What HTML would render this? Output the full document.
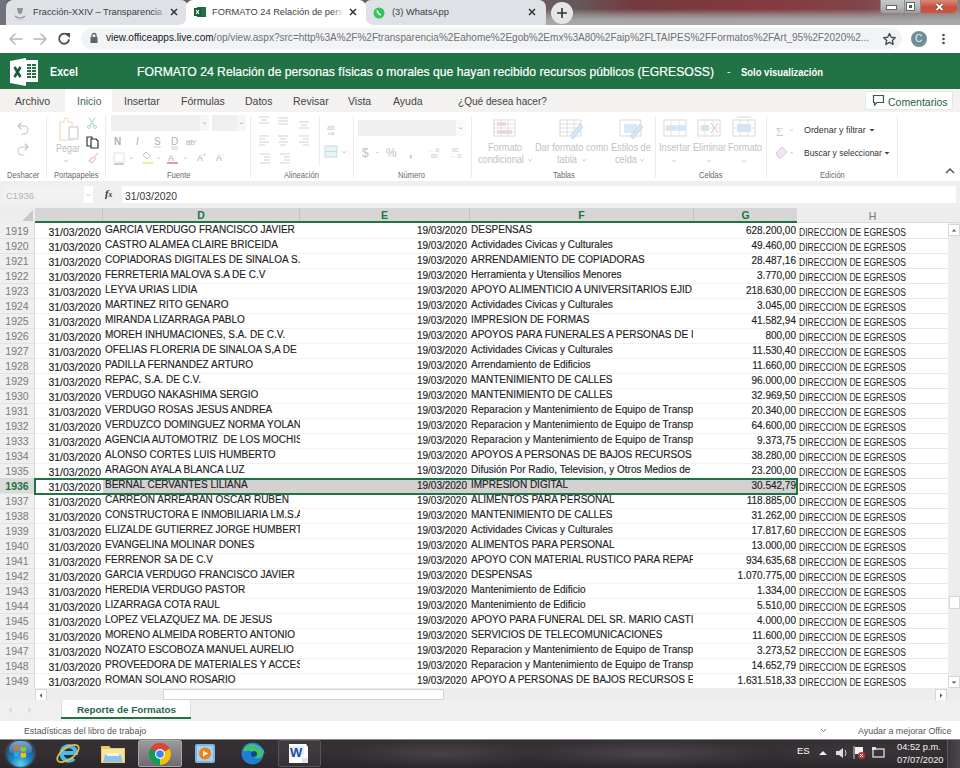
<!DOCTYPE html>
<html><head><meta charset="utf-8">
<style>
*{margin:0;padding:0;box-sizing:border-box}
html,body{width:960px;height:768px;overflow:hidden;background:#fff;font-family:"Liberation Sans",sans-serif;color:#222}
.a{position:absolute}
.tab{top:0;height:25px;background:#dee1e6;border-radius:7px 7px 0 0}
.tabt{font-size:9.3px;color:#3c4043;white-space:nowrap;overflow:hidden;top:7px}
.rt{top:94px;font-size:11.7px;color:#444;white-space:nowrap;transform:scaleX(.9);transform-origin:0 0}
.rib{font-size:10.2px;color:#c2c2c2;white-space:nowrap;transform:scaleX(.9);transform-origin:0 0}
.gl{top:170px;font-size:8.6px;color:#6a6a6a;white-space:nowrap;transform:scaleX(.88);transform-origin:0 0}
.sep{top:116px;width:1px;height:62px;background:#ececec}
.ch{top:208px;height:14px;background:#d6d6d6;border-right:1px solid #c4c4c4;font-size:10.5px;font-weight:bold;color:#217346;text-align:center;line-height:15px}
.rh{position:absolute;left:0;width:34px;height:15px;font-size:10.5px;color:#7a7a7a;text-align:center;line-height:17px}
.rhs{background:#dadada;color:#217346;font-weight:bold}
.c{position:absolute;height:15px;white-space:pre;overflow:hidden;font-size:10px;color:#1e1e1e;-webkit-text-stroke:0.15px #1e1e1e}
.gr{position:absolute;left:35px;width:762px;height:1px;background:#f2f2f2}
.dt{left:35px;width:66px;text-align:right;font-size:10.5px;line-height:19px}
.nm{left:105px;width:195px;line-height:14px}
.ed{left:300px;width:167px;text-align:right;line-height:16px;font-size:10px}
.cp{left:471px;width:222px;line-height:14px}
.vl{left:694px;width:102px;text-align:right;line-height:15px}
.hc{position:absolute;left:797px;width:151px;height:15px;border-bottom:1px solid #e6e6e6;background:#fff;overflow:hidden}
.hc span{position:absolute;left:2px;top:3px;font-size:10px;transform:scaleX(0.856);transform-origin:0 0;white-space:nowrap;color:#1e1e1e}
.selrow{position:absolute;left:103px;width:694px;height:15px;background:#d2d2d2}
.sbtn{width:12px;height:12px;background:#fff;border:1px solid #d6d6d6;display:flex;align-items:center;justify-content:center}
</style></head><body>
<!-- ===== window frame + tabs ===== -->
<div class="a" style="left:0;top:0;width:960px;height:25px;background:linear-gradient(90deg,#6a5a5e 0%,#6a5a5e 57%,#66585c 60%,#743a3e 66%,#843a3e 80%,#80464a 90%,#8a8085 100%)"></div>
<div class="a" style="left:545px;top:0;width:415px;height:25px;background:linear-gradient(180deg,rgba(0,0,0,0) 0%,rgba(0,0,0,0) 36%,rgba(160,158,160,0.75) 62%,rgba(165,165,167,1) 80%,rgba(170,170,172,1) 100%)"></div>
<div class="a" style="left:0;top:0;width:7px;height:25px;background:#70717d"></div>
<div class="a tab" style="left:6px;width:182px"></div>
<div class="a tab" style="left:364px;width:182px"></div>
<div class="a tab" style="left:186px;width:180px;background:#fff"></div>
<div class="a" style="left:8px;top:23px;width:178px;height:2px;background:#dee1e6"></div>
<svg class="a" style="left:179px;top:18px" width="7" height="7" viewBox="0 0 7 7"><path d="M7 0V7H0A7 7 0 0 0 7 0Z" fill="#fff"/></svg>
<svg class="a" style="left:366px;top:18px" width="7" height="7" viewBox="0 0 7 7"><path d="M0 0V7H7A7 7 0 0 1 0 0Z" fill="#fff"/></svg>
<!-- favicon 1 -->
<svg class="a" style="left:14px;top:6px" width="12" height="16" viewBox="0 0 12 16"><path d="M3 2h6l-1 5q-2 2-4 0z" fill="#8a9a8c"/><path d="M1 10q5 4 10 0" stroke="#888" stroke-width="1.2" fill="none"/><path d="M2 13q4 2 8 0" stroke="#ccc" stroke-width="1" fill="none"/></svg>
<div class="a tabt" style="left:33px;width:134px">Fracción-XXIV – Transparencia A</div>
<div class="a" style="left:154px;top:4px;width:14px;height:16px;background:linear-gradient(90deg,rgba(222,225,230,0),#dee1e6 85%)"></div>
<svg class="a" style="left:170px;top:8px" width="8" height="8" viewBox="0 0 8 8"><path d="M1 1L7 7M7 1L1 7" stroke="#333" stroke-width="1.5"/></svg>
<!-- excel favicon -->
<svg class="a" style="left:194px;top:6px" width="12" height="12" viewBox="0 0 12 12"><rect x="3" y="1" width="9" height="10" fill="#1e7145"/><rect x="0" y="2" width="7" height="8" fill="#185c37"/><path d="M2 4l3 4M5 4L2 8" stroke="#fff" stroke-width="1.2"/></svg>
<div class="a tabt" style="left:212px;width:134px">FORMATO 24 Relación de personas</div>
<div class="a" style="left:332px;top:4px;width:14px;height:16px;background:linear-gradient(90deg,rgba(255,255,255,0),#fff 85%)"></div>
<svg class="a" style="left:349px;top:8px" width="8" height="8" viewBox="0 0 8 8"><path d="M1 1L7 7M7 1L1 7" stroke="#333" stroke-width="1.5"/></svg>
<!-- whatsapp favicon -->
<svg class="a" style="left:373px;top:7px" width="12" height="12" viewBox="0 0 12 12"><circle cx="6" cy="6" r="5.5" fill="#2fc657"/><path d="M4 3.5q1 3.5 4 4.5" stroke="#fff" stroke-width="1.6" fill="none"/></svg>
<div class="a tabt" style="left:392px">(3) WhatsApp</div>
<svg class="a" style="left:528px;top:8px" width="8" height="8" viewBox="0 0 8 8"><path d="M1 1L7 7M7 1L1 7" stroke="#333" stroke-width="1.5"/></svg>
<!-- new tab -->
<div class="a" style="left:551px;top:2px;width:22px;height:22px;border-radius:11px;background:#e6e6e8"></div>
<svg class="a" style="left:556px;top:7px" width="12" height="12" viewBox="0 0 12 12"><path d="M6 1V11M1 6H11" stroke="#333" stroke-width="1.6"/></svg>
<!-- window controls -->
<div class="a" style="left:880px;top:0;width:78px;height:14px;border:1px solid #8a8a8a;border-top:none;border-radius:0 0 4px 4px;background:linear-gradient(180deg,#c9c9cb 0%,#b8b8ba 50%,#9c9c9e 100%)"></div>
<div class="a" style="left:921px;top:0;width:36px;height:13px;border-radius:0 0 4px 0;background:linear-gradient(180deg,#d98a7c 0%,#c9503b 55%,#d2533c 100%)"></div>
<div class="a" style="left:904px;top:0;width:1px;height:13px;background:#8a8a8a"></div>
<div class="a" style="left:920px;top:0;width:1px;height:13px;background:#8a8a8a"></div>
<div class="a" style="left:887px;top:6px;width:9px;height:3px;background:#fff;outline:1px solid #666"></div>
<div class="a" style="left:907px;top:3px;width:7px;height:7px;border:2px solid #fff;outline:1px solid #666;background:#555"></div>
<svg class="a" style="left:934px;top:2px" width="11" height="10" viewBox="0 0 11 10"><path d="M2.5 2L8.5 8M8.5 2L2.5 8" stroke="#6a3a30" stroke-width="3.2"/><path d="M2.5 2L8.5 8M8.5 2L2.5 8" stroke="#fff" stroke-width="1.8"/></svg>

<!-- ===== address bar ===== -->
<div class="a" style="left:0;top:25px;width:960px;height:28px;background:#fff"></div>
<svg class="a" style="left:0;top:25px" width="80" height="28" viewBox="0 0 80 28"><g fill="none" stroke-width="1.5" stroke-linecap="round" stroke-linejoin="round"><path d="M10 14H22M15 9L10 14L15 19" stroke="#b5b7ba"/><path d="M34 14H46M41 9L46 14L41 19" stroke="#b5b7ba"/><path d="M68 10.5A5 5 0 1 0 69 15" stroke="#4a4d51" stroke-width="1.8"/></g><path d="M65 8L70 8L70 13Z" fill="#4a4d51"/></svg>
<div class="a" style="left:81px;top:28px;width:821px;height:21px;border-radius:11px;background:#f1f3f4"></div>
<svg class="a" style="left:89px;top:32px" width="10" height="12" viewBox="0 0 10 12"><rect x="1.5" y="5" width="7" height="6" fill="#5f6368"/><path d="M3 5.5V3.5a2 2 0 0 1 4 0V5.5" stroke="#5f6368" stroke-width="1.3" fill="none"/></svg>
<div class="a" style="left:106px;top:32px;font-size:10.06px;color:#6f7175;white-space:nowrap"><span style="color:#202124">view.officeapps.live.com</span>/op/view.aspx?src=http%3A%2F%2Ftransparencia%2Eahome%2Egob%2Emx%3A80%2Faip%2FLTAIPES%2FFormatos%2FArt_95%2F2020%2...</div>
<svg class="a" style="left:882px;top:32px" width="15" height="14" viewBox="0 0 15 14"><path d="M7.5 1.5L9.3 5.3L13.3 5.7L10.3 8.4L11.2 12.4L7.5 10.3L3.8 12.4L4.7 8.4L1.7 5.7L5.7 5.3Z" fill="none" stroke="#4a4d51" stroke-width="1.4" stroke-linejoin="round"/></svg>
<div class="a" style="left:911px;top:31px;width:16px;height:16px;border-radius:8px;background:#6f8e9c"></div>
<div class="a" style="left:915px;top:33px;font-size:10px;color:#e8f0f4">C</div>
<svg class="a" style="left:941px;top:33px" width="5" height="12" viewBox="0 0 5 12"><circle cx="2.5" cy="2" r="1.3" fill="#4a4d51"/><circle cx="2.5" cy="6" r="1.3" fill="#4a4d51"/><circle cx="2.5" cy="10" r="1.3" fill="#4a4d51"/></svg>

<!-- ===== excel header ===== -->
<div class="a" style="left:0;top:53px;width:960px;height:36px;background:#217346"></div>
<svg class="a" style="left:8px;top:56px" width="34" height="32" viewBox="0 0 34 32"><path d="M17 4h13v22H17z" fill="#fff"/><g fill="#217346"><rect x="19" y="8" width="4" height="2"/><rect x="24" y="8" width="4" height="2"/><rect x="19" y="11" width="4" height="2"/><rect x="24" y="11" width="4" height="2"/><rect x="19" y="14" width="4" height="2"/><rect x="24" y="14" width="4" height="2"/><rect x="19" y="17" width="4" height="2"/><rect x="24" y="17" width="4" height="2"/><rect x="19" y="20" width="4" height="2"/><rect x="24" y="20" width="4" height="2"/></g><path d="M2 5L18 2V30L2 27Z" fill="#fff"/><path d="M6.5 11L12.5 21M12.5 11L6.5 21" stroke="#185c37" stroke-width="2.6"/></svg>
<div class="a" style="left:50px;top:64.5px;font-size:12.6px;font-weight:bold;color:#fff;transform:scaleX(.85);transform-origin:0 0">Excel</div>
<div class="a" style="left:137px;top:64px;font-size:13px;color:#fff;white-space:nowrap;transform:scaleX(.937);transform-origin:0 0;-webkit-text-stroke:0.2px #fff">FORMATO 24 Relación de personas físicas o morales que hayan recibido recursos públicos (EGRESOSS)</div>
<div class="a" style="left:727px;top:65px;font-size:11px;color:#fff">-</div>
<div class="a" style="left:741px;top:66px;font-size:10.8px;font-weight:bold;color:#fff;white-space:nowrap;transform:scaleX(.876);transform-origin:0 0">Solo visualización</div>
<!-- ===== ribbon tabs ===== -->
<div class="a" style="left:0;top:89px;width:960px;height:23px;background:#f3f2f1"></div>
<div class="a" style="left:65px;top:89px;width:47px;height:23px;background:#fff"></div>
<div class="a rt" style="left:15px">Archivo</div>
<div class="a rt" style="left:77px;color:#3f6b55">Inicio</div>
<div class="a rt" style="left:124px">Insertar</div>
<div class="a rt" style="left:181px">Fórmulas</div>
<div class="a rt" style="left:245px">Datos</div>
<div class="a rt" style="left:293px">Revisar</div>
<div class="a rt" style="left:348px">Vista</div>
<div class="a rt" style="left:393px">Ayuda</div>
<div class="a rt" style="left:458px;transform:scaleX(.86)">¿Qué desea hacer?</div>
<div class="a" style="left:865px;top:91px;width:88px;height:19px;background:#fff;border:1px solid #e6e6e6"></div>
<svg class="a" style="left:872px;top:94px" width="13" height="13" viewBox="0 0 13 13"><path d="M1.5 1.5H11.5V8.5H5L2.5 11V8.5H1.5Z" fill="none" stroke="#3a5a48" stroke-width="1.2"/></svg>
<div class="a rt" style="left:888px;top:95px;color:#1f5e3a">Comentarios</div>

<!-- ===== ribbon body ===== -->
<div class="a" style="left:0;top:112px;width:960px;height:69px;background:#fff"></div>
<div class="a sep" style="left:46px"></div>
<div class="a sep" style="left:105px"></div>
<div class="a sep" style="left:250px"></div>
<div class="a sep" style="left:319px;top:116px;height:50px"></div>
<div class="a sep" style="left:353px"></div>
<div class="a sep" style="left:471px"></div>
<div class="a sep" style="left:655px"></div>
<div class="a sep" style="left:766px"></div>
<div class="a sep" style="left:897px"></div>
<svg class="a" style="left:0;top:112px" width="960" height="69" viewBox="0 112 960 69">
 <g fill="none" stroke-linecap="round" stroke-linejoin="round">
  <!-- undo/redo -->
  <path d="M21 123l-3 3 3 3M18 126h6a4 4 0 0 1 0 8h-2" stroke="#c4c4c4" stroke-width="1.1"/>
  <path d="M25 144l3 3-3 3M28 147h-6a4 4 0 0 0 0 8h2" stroke="#c4c4c4" stroke-width="1.1"/>
  <!-- paste -->
  <path d="M60 122h4v-2a2 2 0 0 1 4 0v2h4v18h-12z" stroke="#f0d8b8" stroke-width="1.1"/>
  <rect x="69" y="127" width="9" height="12" stroke="#c8c8c8" stroke-width="1.1" fill="#fff"/>
  <path d="M64 160l2 2 2-2" stroke="#c8c8c8" stroke-width="1"/>
  <!-- scissors -->
  <path d="M89 118l5 7M95 118l-5 7" stroke="#b8d4cc" stroke-width="1.1"/><circle cx="89" cy="127" r="1.5" stroke="#b8d4cc"/><circle cx="95" cy="127" r="1.5" stroke="#b8d4cc"/>
  <!-- copy -->
  <path d="M87 137h5v9h-5z" stroke="#333" stroke-width="1.2"/><path d="M91 139h5l2 2v7h-7z" stroke="#333" stroke-width="1.2" fill="#fff"/>
  <!-- format painter -->
  <path d="M89 161l4-4 3 1-4 5z" stroke="#e8c2b8" stroke-width="1.1"/><path d="M95 156l3-3" stroke="#cfcfcf" stroke-width="1.1"/>
 </g>
 <!-- font dropdowns -->
 <rect x="111" y="115" width="98" height="16" fill="#efefef"/>
 <rect x="200" y="115" width="9" height="16" fill="#f6f6f6"/>
 <path d="M203 122.5l1.5 1.5 1.5-1.5" stroke="#aaa" fill="none"/>
 <rect x="212" y="115" width="34" height="16" fill="#efefef"/>
 <rect x="237" y="115" width="9" height="16" fill="#f6f6f6"/>
 <path d="M240 122.5l1.5 1.5 1.5-1.5" stroke="#aaa" fill="none"/>
 <g font-family="Liberation Sans" fill="#b0b0b0">
  <text x="114" y="145" font-size="10" font-weight="bold">N</text>
  <text x="136" y="145" font-size="10" font-style="italic">I</text>
  <text x="154" y="145" font-size="10">S</text>
  <text x="171" y="145" font-size="10">D</text>
  <text x="186" y="145" font-size="8">ab</text>
  <text x="197" y="161" font-size="9">A</text><text x="203" y="156" font-size="5">+</text>
  <text x="216" y="161" font-size="9">A</text><text x="222" y="156" font-size="5">-</text>
  <text x="168" y="161" font-size="9">A</text>
 </g>
 <path d="M154 147h7M171 147h7M171 149h7M186 141h11" stroke="#c4c4c4" stroke-width="0.8"/>
 <rect x="114" y="153" width="10" height="9" fill="none" stroke="#e2e2e2"/>
 <path d="M114 164h10" stroke="#999" stroke-width="1"/>
 <path d="M146 152l4 4-3 3-4-4z" fill="none" stroke="#c8c8c8"/>
 <path d="M143 163h10" stroke="#eef08a" stroke-width="2"/>
 <path d="M167 163h11" stroke="#e69aa4" stroke-width="2"/>
 <path d="M130 158h3M157 158h3M184 158h3" stroke="#c8c8c8"/>
 <!-- alignment -->
 <g stroke="#d2d2d2" stroke-width="1.1">
  <path d="M259 117h10M261 120h6M259 123h10"/>
  <path d="M278 118h10M278 121h10M278 124h10"/>
  <path d="M299 122h10M301 125h6M299 128h10"/>
  <path d="M259 136h10M259 139h6M259 142h10M259 145h6"/>
  <path d="M278 136h10M280 139h6M278 142h10M280 145h6"/>
  <path d="M299 136h10M303 139h6M299 142h10M303 145h6"/>
  <path d="M260 154h10M264 157h6M264 160h6M260 163h10"/>
  <path d="M280 154h10M284 157h6M284 160h6M280 163h10"/>
 </g>
 <!-- wrap / merge -->
 <text x="327" y="130" font-family="Liberation Sans" font-size="7" fill="#c4c4c4">ab</text>
 <path d="M328 134h6l-2 -2" stroke="#c4c4c4" fill="none"/>
 <rect x="325" y="146" width="12" height="11" fill="#e8f4f4" stroke="#c8dcdc"/>
 <path d="M325 151.5h12" stroke="#c8dcdc"/>
 <path d="M342 151l2 2 2-2" stroke="#c8c8c8" fill="none"/>
 <!-- number -->
 <rect x="358" y="120" width="108" height="16" fill="#efefef"/>
 <rect x="456" y="120" width="10" height="16" fill="#fafafa"/>
 <path d="M459 127.5l1.5 1.5 1.5-1.5" stroke="#aaa" fill="none"/>
 <g font-family="Liberation Sans" fill="#c0c0c0">
  <text x="362" y="157" font-size="12">$</text>
  <text x="376" y="155" font-size="9">-</text>
  <text x="386" y="157" font-size="12">%</text>
  <text x="409" y="157" font-size="12" font-weight="bold">,</text>
  <text x="428" y="152" font-size="6">←.0</text><text x="431" y="158" font-size="6">00</text>
  <text x="450" y="152" font-size="6">.00</text><text x="450" y="158" font-size="6">→.0</text>
 </g>
 <!-- tablas icons -->
 <g stroke="#d8d8d8" stroke-width="0.9" fill="none">
  <rect x="494" y="120" width="21" height="16" fill="#fff"/>
 </g>
 <rect x="497" y="122" width="9" height="4" fill="#f6d4dc"/><rect x="497" y="130" width="15" height="4" fill="#f6d4dc"/>
 <path d="M494 124h21M494 128h21M494 132h21M501 120v16M508 120v16" stroke="#d8d8d8" stroke-width="0.8"/>
 <rect x="560" y="120" width="21" height="16" fill="#fff" stroke="#d8d8d8" stroke-width="0.9"/>
 <path d="M560 124h21M560 128h21M560 132h21M567 120v16M574 120v16" stroke="#d8d8d8" stroke-width="0.8"/>
 <path d="M570 136l10-12 3 3-10 12z" fill="#d4e6f6" stroke="#c0d6ea" stroke-width="0.8"/>
 <rect x="620" y="120" width="21" height="16" fill="#fff" stroke="#d8d8d8" stroke-width="0.9"/>
 <rect x="624" y="124" width="13" height="9" fill="#d8eaf8"/>
 <path d="M630 136l10-12 3 3-10 12z" fill="#d4e6f6" stroke="#c0d6ea" stroke-width="0.8"/>
 <!-- celdas icons -->
 <g stroke="#d4d4d4" stroke-width="0.9" fill="#fff">
  <rect x="664" y="120" width="22" height="16"/><rect x="698" y="120" width="22" height="16"/><rect x="733" y="120" width="22" height="16"/>
 </g>
 <rect x="666" y="125" width="19" height="6" fill="#d6eaf8"/>
 <rect x="701" y="125" width="8" height="6" fill="#d6e4f4"/>
 <path d="M711 123l7 10M718 123l-7 10" stroke="#f0b8b8" stroke-width="1"/>
 <rect x="737" y="124" width="14" height="8" fill="#d6e6f6"/>
 <path d="M664 128h22M698 128h22M733 128h22M671 120v16M679 120v16M705 120v16M713 120v16M740 120v16M748 120v16" stroke="#e0e0e0" stroke-width="0.8"/>
 <path d="M737 117h14" stroke="#c8d8e8" stroke-width="1"/>
 <g stroke="#cfcfcf" fill="none"><path d="M528 159l2 2 2-2M582 159l2 2 2-2M640 159l2 2 2-2M672 160l2 2 2-2M707 160l2 2 2-2M742 160l2 2 2-2"/></g>
 <!-- edicion -->
 <text x="776" y="136" font-family="Liberation Serif" font-size="13" fill="#c8c8c8">Σ</text>
 <path d="M790 130h3M790 153h3" stroke="#ccc"/>
 <path d="M776 153l6-6 5 5-6 6h-2z" fill="#f3e6f3" stroke="#dcc2dc"/>
 <path d="M869.5 129h5l-2.5 2.5zM884.5 152h5l-2.5 2.5z" fill="#444"/>
 <path d="M946 173l4-4 4 4" stroke="#555" fill="none" stroke-width="1.5"/>
</svg>
<div class="a rib" style="left:56px;top:143px;color:#bdbdbd;font-size:10px">Pegar</div>
<div class="a rib" style="left:488px;top:142px">Formato</div>
<div class="a rib" style="left:478px;top:154px">condicional</div>
<div class="a rib" style="left:535px;top:142px">Dar formato como</div>
<div class="a rib" style="left:557px;top:154px">tabla</div>
<div class="a rib" style="left:611px;top:142px">Estilos de</div>
<div class="a rib" style="left:615px;top:154px">celda</div>
<div class="a rib" style="left:659px;top:142px">Insertar</div>
<div class="a rib" style="left:693px;top:142px">Eliminar</div>
<div class="a rib" style="left:728px;top:142px">Formato</div>
<div class="a rib" style="left:804px;top:124px;color:#333;font-size:9.9px">Ordenar y filtrar</div>
<div class="a rib" style="left:804px;top:147px;color:#333;font-size:9.4px">Buscar y seleccionar</div>
<div class="a gl" style="left:7px">Deshacer</div>
<div class="a gl" style="left:54px">Portapapeles</div>
<div class="a gl" style="left:167px">Fuente</div>
<div class="a gl" style="left:284px">Alineación</div>
<div class="a gl" style="left:398px">Número</div>
<div class="a gl" style="left:553px">Tablas</div>
<div class="a gl" style="left:699px">Celdas</div>
<div class="a gl" style="left:820px">Edición</div>
<!-- ===== formula bar ===== -->
<div class="a" style="left:0;top:181px;width:960px;height:27px;background:#efefef"></div>
<div class="a" style="left:3px;top:186px;width:90px;height:17px;background:#f2f2f2"></div>
<div class="a" style="left:84px;top:186px;width:9px;height:17px;background:#fff"></div>
<div class="a" style="left:6px;top:190px;font-size:9.5px;color:#b4b4b4">C1936</div>

<svg class="a" style="left:86px;top:193px" width="5" height="4" viewBox="0 0 5 4"><path d="M0.5 1l2 2 2-2" stroke="#ccc" fill="none"/></svg>
<div class="a" style="left:105px;top:188px;font-size:10.5px;font-style:italic;font-weight:bold;font-family:'Liberation Serif',serif;color:#333">f<span style="font-size:7.5px">x</span></div>
<div class="a" style="left:122px;top:186px;width:834px;height:17px;background:#fff"></div>
<div class="a" style="left:125px;top:191px;font-size:10.4px;color:#3a3a3a">31/03/2020</div>

<!-- ===== column headers ===== -->
<div class="a" style="left:0;top:208px;width:960px;height:15px;background:#ededed"></div>
<svg class="a" style="left:20px;top:209px" width="14" height="13" viewBox="0 0 14 13"><path d="M13 1V12H2Z" fill="#c8c8c8"/></svg>
<div class="a ch" style="left:35px;width:68px"></div>
<div class="a ch" style="left:103px;width:197px">D</div>
<div class="a ch" style="left:300px;width:170px">E</div>
<div class="a ch" style="left:470px;width:224px">F</div>
<div class="a ch" style="left:694px;width:103px;border-right:none">G</div>
<div class="a" style="left:35px;top:221px;width:762px;height:2px;background:#217346"></div>
<div class="a" style="left:797px;top:222px;width:163px;height:1px;background:#dadada"></div>
<div class="a" style="left:797px;top:208px;width:151px;height:15px;font-size:10.5px;color:#777;text-align:center;line-height:16px">H</div>

<!-- ===== grid ===== -->
<div class="a" style="left:0;top:223px;width:35px;height:465px;background:#efefef"></div>
<div class="a" style="left:34px;top:223px;width:1px;height:465px;background:#dadada"></div>
<div class="a" style="left:35px;top:223px;width:913px;height:465px;background:#fff"></div>
<div class="rh" style="top:223px">1919</div>
<div class="c dt" style="top:223px">31/03/2020</div>
<div class="c nm" style="top:223px">GARCIA VERDUGO FRANCISCO JAVIER</div>
<div class="c ed" style="top:223px">19/03/2020</div>
<div class="c cp" style="top:223px">DESPENSAS</div>
<div class="c vl" style="top:223px">628.200,00</div>
<div class="gr" style="top:238px"></div>
<div class="a" style="left:0;top:238px;width:34px;height:1px;background:#e2e2e2"></div>
<div class="hc" style="top:224px"><span>DIRECCION DE EGRESOS</span></div>
<div class="rh" style="top:238px">1920</div>
<div class="c dt" style="top:238px">31/03/2020</div>
<div class="c nm" style="top:238px">CASTRO ALAMEA CLAIRE BRICEIDA</div>
<div class="c ed" style="top:238px">19/03/2020</div>
<div class="c cp" style="top:238px">Actividades Civicas y Culturales</div>
<div class="c vl" style="top:238px">49.460,00</div>
<div class="gr" style="top:253px"></div>
<div class="a" style="left:0;top:253px;width:34px;height:1px;background:#e2e2e2"></div>
<div class="hc" style="top:239px"><span>DIRECCION DE EGRESOS</span></div>
<div class="rh" style="top:253px">1921</div>
<div class="c dt" style="top:253px">31/03/2020</div>
<div class="c nm" style="top:253px">COPIADORAS DIGITALES DE SINALOA S.</div>
<div class="c ed" style="top:253px">19/03/2020</div>
<div class="c cp" style="top:253px">ARRENDAMIENTO DE COPIADORAS</div>
<div class="c vl" style="top:253px">28.487,16</div>
<div class="gr" style="top:268px"></div>
<div class="a" style="left:0;top:268px;width:34px;height:1px;background:#e2e2e2"></div>
<div class="hc" style="top:254px"><span>DIRECCION DE EGRESOS</span></div>
<div class="rh" style="top:268px">1922</div>
<div class="c dt" style="top:268px">31/03/2020</div>
<div class="c nm" style="top:268px">FERRETERIA MALOVA S.A DE C.V</div>
<div class="c ed" style="top:268px">19/03/2020</div>
<div class="c cp" style="top:268px">Herramienta y Utensilios Menores</div>
<div class="c vl" style="top:268px">3.770,00</div>
<div class="gr" style="top:283px"></div>
<div class="a" style="left:0;top:283px;width:34px;height:1px;background:#e2e2e2"></div>
<div class="hc" style="top:269px"><span>DIRECCION DE EGRESOS</span></div>
<div class="rh" style="top:283px">1923</div>
<div class="c dt" style="top:283px">31/03/2020</div>
<div class="c nm" style="top:283px">LEYVA URIAS LIDIA</div>
<div class="c ed" style="top:283px">19/03/2020</div>
<div class="c cp" style="top:283px">APOYO ALIMENTICIO A UNIVERSITARIOS EJID.</div>
<div class="c vl" style="top:283px">218.630,00</div>
<div class="gr" style="top:298px"></div>
<div class="a" style="left:0;top:298px;width:34px;height:1px;background:#e2e2e2"></div>
<div class="hc" style="top:284px"><span>DIRECCION DE EGRESOS</span></div>
<div class="rh" style="top:298px">1924</div>
<div class="c dt" style="top:298px">31/03/2020</div>
<div class="c nm" style="top:298px">MARTINEZ RITO GENARO</div>
<div class="c ed" style="top:298px">19/03/2020</div>
<div class="c cp" style="top:298px">Actividades Civicas y Culturales</div>
<div class="c vl" style="top:298px">3.045,00</div>
<div class="gr" style="top:313px"></div>
<div class="a" style="left:0;top:313px;width:34px;height:1px;background:#e2e2e2"></div>
<div class="hc" style="top:299px"><span>DIRECCION DE EGRESOS</span></div>
<div class="rh" style="top:313px">1925</div>
<div class="c dt" style="top:313px">31/03/2020</div>
<div class="c nm" style="top:313px">MIRANDA LIZARRAGA PABLO</div>
<div class="c ed" style="top:313px">19/03/2020</div>
<div class="c cp" style="top:313px">IMPRESION DE FORMAS</div>
<div class="c vl" style="top:313px">41.582,94</div>
<div class="gr" style="top:328px"></div>
<div class="a" style="left:0;top:328px;width:34px;height:1px;background:#e2e2e2"></div>
<div class="hc" style="top:314px"><span>DIRECCION DE EGRESOS</span></div>
<div class="rh" style="top:328px">1926</div>
<div class="c dt" style="top:328px">31/03/2020</div>
<div class="c nm" style="top:328px">MOREH INHUMACIONES, S.A. DE C.V.</div>
<div class="c ed" style="top:328px">19/03/2020</div>
<div class="c cp" style="top:328px">APOYOS PARA FUNERALES A PERSONAS DE I</div>
<div class="c vl" style="top:328px">800,00</div>
<div class="gr" style="top:343px"></div>
<div class="a" style="left:0;top:343px;width:34px;height:1px;background:#e2e2e2"></div>
<div class="hc" style="top:329px"><span>DIRECCION DE EGRESOS</span></div>
<div class="rh" style="top:343px">1927</div>
<div class="c dt" style="top:343px">31/03/2020</div>
<div class="c nm" style="top:343px">OFELIAS FLORERIA DE SINALOA S,A DE</div>
<div class="c ed" style="top:343px">19/03/2020</div>
<div class="c cp" style="top:343px">Actividades Civicas y Culturales</div>
<div class="c vl" style="top:343px">11.530,40</div>
<div class="gr" style="top:358px"></div>
<div class="a" style="left:0;top:358px;width:34px;height:1px;background:#e2e2e2"></div>
<div class="hc" style="top:344px"><span>DIRECCION DE EGRESOS</span></div>
<div class="rh" style="top:358px">1928</div>
<div class="c dt" style="top:358px">31/03/2020</div>
<div class="c nm" style="top:358px">PADILLA FERNANDEZ ARTURO</div>
<div class="c ed" style="top:358px">19/03/2020</div>
<div class="c cp" style="top:358px">Arrendamiento de Edificios</div>
<div class="c vl" style="top:358px">11.660,00</div>
<div class="gr" style="top:373px"></div>
<div class="a" style="left:0;top:373px;width:34px;height:1px;background:#e2e2e2"></div>
<div class="hc" style="top:359px"><span>DIRECCION DE EGRESOS</span></div>
<div class="rh" style="top:373px">1929</div>
<div class="c dt" style="top:373px">31/03/2020</div>
<div class="c nm" style="top:373px">REPAC, S.A. DE C.V.</div>
<div class="c ed" style="top:373px">19/03/2020</div>
<div class="c cp" style="top:373px">MANTENIMIENTO DE CALLES</div>
<div class="c vl" style="top:373px">96.000,00</div>
<div class="gr" style="top:388px"></div>
<div class="a" style="left:0;top:388px;width:34px;height:1px;background:#e2e2e2"></div>
<div class="hc" style="top:374px"><span>DIRECCION DE EGRESOS</span></div>
<div class="rh" style="top:388px">1930</div>
<div class="c dt" style="top:388px">31/03/2020</div>
<div class="c nm" style="top:388px">VERDUGO NAKASHIMA SERGIO</div>
<div class="c ed" style="top:388px">19/03/2020</div>
<div class="c cp" style="top:388px">MANTENIMIENTO DE CALLES</div>
<div class="c vl" style="top:388px">32.969,50</div>
<div class="gr" style="top:403px"></div>
<div class="a" style="left:0;top:403px;width:34px;height:1px;background:#e2e2e2"></div>
<div class="hc" style="top:389px"><span>DIRECCION DE EGRESOS</span></div>
<div class="rh" style="top:403px">1931</div>
<div class="c dt" style="top:403px">31/03/2020</div>
<div class="c nm" style="top:403px">VERDUGO ROSAS JESUS ANDREA</div>
<div class="c ed" style="top:403px">19/03/2020</div>
<div class="c cp" style="top:403px">Reparacion y Mantenimiento de Equipo de Transp</div>
<div class="c vl" style="top:403px">20.340,00</div>
<div class="gr" style="top:418px"></div>
<div class="a" style="left:0;top:418px;width:34px;height:1px;background:#e2e2e2"></div>
<div class="hc" style="top:404px"><span>DIRECCION DE EGRESOS</span></div>
<div class="rh" style="top:418px">1932</div>
<div class="c dt" style="top:418px">31/03/2020</div>
<div class="c nm" style="top:418px">VERDUZCO DOMINGUEZ NORMA YOLAN</div>
<div class="c ed" style="top:418px">19/03/2020</div>
<div class="c cp" style="top:418px">Reparacion y Mantenimiento de Equipo de Transp</div>
<div class="c vl" style="top:418px">64.600,00</div>
<div class="gr" style="top:433px"></div>
<div class="a" style="left:0;top:433px;width:34px;height:1px;background:#e2e2e2"></div>
<div class="hc" style="top:419px"><span>DIRECCION DE EGRESOS</span></div>
<div class="rh" style="top:433px">1933</div>
<div class="c dt" style="top:433px">31/03/2020</div>
<div class="c nm" style="top:433px">AGENCIA AUTOMOTRIZ  DE LOS MOCHIS</div>
<div class="c ed" style="top:433px">19/03/2020</div>
<div class="c cp" style="top:433px">Reparacion y Mantenimiento de Equipo de Transp</div>
<div class="c vl" style="top:433px">9.373,75</div>
<div class="gr" style="top:448px"></div>
<div class="a" style="left:0;top:448px;width:34px;height:1px;background:#e2e2e2"></div>
<div class="hc" style="top:434px"><span>DIRECCION DE EGRESOS</span></div>
<div class="rh" style="top:448px">1934</div>
<div class="c dt" style="top:448px">31/03/2020</div>
<div class="c nm" style="top:448px">ALONSO CORTES LUIS HUMBERTO</div>
<div class="c ed" style="top:448px">19/03/2020</div>
<div class="c cp" style="top:448px">APOYOS A PERSONAS DE BAJOS RECURSOS</div>
<div class="c vl" style="top:448px">38.280,00</div>
<div class="gr" style="top:463px"></div>
<div class="a" style="left:0;top:463px;width:34px;height:1px;background:#e2e2e2"></div>
<div class="hc" style="top:449px"><span>DIRECCION DE EGRESOS</span></div>
<div class="rh" style="top:463px">1935</div>
<div class="c dt" style="top:463px">31/03/2020</div>
<div class="c nm" style="top:463px">ARAGON AYALA BLANCA LUZ</div>
<div class="c ed" style="top:463px">19/03/2020</div>
<div class="c cp" style="top:463px">Difusión Por Radio, Television, y Otros Medios de I</div>
<div class="c vl" style="top:463px">23.200,00</div>
<div class="gr" style="top:478px"></div>
<div class="a" style="left:0;top:478px;width:34px;height:1px;background:#e2e2e2"></div>
<div class="hc" style="top:464px"><span>DIRECCION DE EGRESOS</span></div>
<div class="rh rhs" style="top:478px">1936</div>
<div class="selrow" style="top:478px"></div>
<div class="c dt" style="top:478px">31/03/2020</div>
<div class="c nm" style="top:478px">BERNAL CERVANTES LILIANA</div>
<div class="c ed" style="top:478px">19/03/2020</div>
<div class="c cp" style="top:478px">IMPRESION DIGITAL</div>
<div class="c vl" style="top:478px">30.542,79</div>
<div class="gr" style="top:493px"></div>
<div class="a" style="left:0;top:493px;width:34px;height:1px;background:#e2e2e2"></div>
<div class="hc" style="top:479px"><span>DIRECCION DE EGRESOS</span></div>
<div class="rh" style="top:493px">1937</div>
<div class="c dt" style="top:493px">31/03/2020</div>
<div class="c nm" style="top:493px">CARREON ARREARAN OSCAR RUBEN</div>
<div class="c ed" style="top:493px">19/03/2020</div>
<div class="c cp" style="top:493px">ALIMENTOS PARA PERSONAL</div>
<div class="c vl" style="top:493px">118.885,00</div>
<div class="gr" style="top:508px"></div>
<div class="a" style="left:0;top:508px;width:34px;height:1px;background:#e2e2e2"></div>
<div class="hc" style="top:494px"><span>DIRECCION DE EGRESOS</span></div>
<div class="rh" style="top:508px">1938</div>
<div class="c dt" style="top:508px">31/03/2020</div>
<div class="c nm" style="top:508px">CONSTRUCTORA E INMOBILIARIA LM.S.A</div>
<div class="c ed" style="top:508px">19/03/2020</div>
<div class="c cp" style="top:508px">MANTENIMIENTO DE CALLES</div>
<div class="c vl" style="top:508px">31.262,00</div>
<div class="gr" style="top:523px"></div>
<div class="a" style="left:0;top:523px;width:34px;height:1px;background:#e2e2e2"></div>
<div class="hc" style="top:509px"><span>DIRECCION DE EGRESOS</span></div>
<div class="rh" style="top:523px">1939</div>
<div class="c dt" style="top:523px">31/03/2020</div>
<div class="c nm" style="top:523px">ELIZALDE GUTIERREZ JORGE HUMBERTO</div>
<div class="c ed" style="top:523px">19/03/2020</div>
<div class="c cp" style="top:523px">Actividades Civicas y Culturales</div>
<div class="c vl" style="top:523px">17.817,60</div>
<div class="gr" style="top:538px"></div>
<div class="a" style="left:0;top:538px;width:34px;height:1px;background:#e2e2e2"></div>
<div class="hc" style="top:524px"><span>DIRECCION DE EGRESOS</span></div>
<div class="rh" style="top:538px">1940</div>
<div class="c dt" style="top:538px">31/03/2020</div>
<div class="c nm" style="top:538px">EVANGELINA MOLINAR DONES</div>
<div class="c ed" style="top:538px">19/03/2020</div>
<div class="c cp" style="top:538px">ALIMENTOS PARA PERSONAL</div>
<div class="c vl" style="top:538px">13.000,00</div>
<div class="gr" style="top:553px"></div>
<div class="a" style="left:0;top:553px;width:34px;height:1px;background:#e2e2e2"></div>
<div class="hc" style="top:539px"><span>DIRECCION DE EGRESOS</span></div>
<div class="rh" style="top:553px">1941</div>
<div class="c dt" style="top:553px">31/03/2020</div>
<div class="c nm" style="top:553px">FERRENOR SA DE C.V</div>
<div class="c ed" style="top:553px">19/03/2020</div>
<div class="c cp" style="top:553px">APOYO CON MATERIAL RUSTICO PARA REPARAR</div>
<div class="c vl" style="top:553px">934.635,68</div>
<div class="gr" style="top:568px"></div>
<div class="a" style="left:0;top:568px;width:34px;height:1px;background:#e2e2e2"></div>
<div class="hc" style="top:554px"><span>DIRECCION DE EGRESOS</span></div>
<div class="rh" style="top:568px">1942</div>
<div class="c dt" style="top:568px">31/03/2020</div>
<div class="c nm" style="top:568px">GARCIA VERDUGO FRANCISCO JAVIER</div>
<div class="c ed" style="top:568px">19/03/2020</div>
<div class="c cp" style="top:568px">DESPENSAS</div>
<div class="c vl" style="top:568px">1.070.775,00</div>
<div class="gr" style="top:583px"></div>
<div class="a" style="left:0;top:583px;width:34px;height:1px;background:#e2e2e2"></div>
<div class="hc" style="top:569px"><span>DIRECCION DE EGRESOS</span></div>
<div class="rh" style="top:583px">1943</div>
<div class="c dt" style="top:583px">31/03/2020</div>
<div class="c nm" style="top:583px">HEREDIA VERDUGO PASTOR</div>
<div class="c ed" style="top:583px">19/03/2020</div>
<div class="c cp" style="top:583px">Mantenimiento de Edificio</div>
<div class="c vl" style="top:583px">1.334,00</div>
<div class="gr" style="top:598px"></div>
<div class="a" style="left:0;top:598px;width:34px;height:1px;background:#e2e2e2"></div>
<div class="hc" style="top:584px"><span>DIRECCION DE EGRESOS</span></div>
<div class="rh" style="top:598px">1944</div>
<div class="c dt" style="top:598px">31/03/2020</div>
<div class="c nm" style="top:598px">LIZARRAGA COTA RAUL</div>
<div class="c ed" style="top:598px">19/03/2020</div>
<div class="c cp" style="top:598px">Mantenimiento de Edificio</div>
<div class="c vl" style="top:598px">5.510,00</div>
<div class="gr" style="top:613px"></div>
<div class="a" style="left:0;top:613px;width:34px;height:1px;background:#e2e2e2"></div>
<div class="hc" style="top:599px"><span>DIRECCION DE EGRESOS</span></div>
<div class="rh" style="top:613px">1945</div>
<div class="c dt" style="top:613px">31/03/2020</div>
<div class="c nm" style="top:613px">LOPEZ VELAZQUEZ MA. DE JESUS</div>
<div class="c ed" style="top:613px">19/03/2020</div>
<div class="c cp" style="top:613px">APOYO PARA FUNERAL DEL SR. MARIO CASTILLO</div>
<div class="c vl" style="top:613px">4.000,00</div>
<div class="gr" style="top:628px"></div>
<div class="a" style="left:0;top:628px;width:34px;height:1px;background:#e2e2e2"></div>
<div class="hc" style="top:614px"><span>DIRECCION DE EGRESOS</span></div>
<div class="rh" style="top:628px">1946</div>
<div class="c dt" style="top:628px">31/03/2020</div>
<div class="c nm" style="top:628px">MORENO ALMEIDA ROBERTO ANTONIO</div>
<div class="c ed" style="top:628px">19/03/2020</div>
<div class="c cp" style="top:628px">SERVICIOS DE TELECOMUNICACIONES</div>
<div class="c vl" style="top:628px">11.600,00</div>
<div class="gr" style="top:643px"></div>
<div class="a" style="left:0;top:643px;width:34px;height:1px;background:#e2e2e2"></div>
<div class="hc" style="top:629px"><span>DIRECCION DE EGRESOS</span></div>
<div class="rh" style="top:643px">1947</div>
<div class="c dt" style="top:643px">31/03/2020</div>
<div class="c nm" style="top:643px">NOZATO ESCOBOZA MANUEL AURELIO</div>
<div class="c ed" style="top:643px">19/03/2020</div>
<div class="c cp" style="top:643px">Reparacion y Mantenimiento de Equipo de Transp</div>
<div class="c vl" style="top:643px">3.273,52</div>
<div class="gr" style="top:658px"></div>
<div class="a" style="left:0;top:658px;width:34px;height:1px;background:#e2e2e2"></div>
<div class="hc" style="top:644px"><span>DIRECCION DE EGRESOS</span></div>
<div class="rh" style="top:658px">1948</div>
<div class="c dt" style="top:658px">31/03/2020</div>
<div class="c nm" style="top:658px">PROVEEDORA DE MATERIALES Y ACCESORIOS</div>
<div class="c ed" style="top:658px">19/03/2020</div>
<div class="c cp" style="top:658px">Reparacion y Mantenimiento de Equipo de Transp</div>
<div class="c vl" style="top:658px">14.652,79</div>
<div class="gr" style="top:673px"></div>
<div class="a" style="left:0;top:673px;width:34px;height:1px;background:#e2e2e2"></div>
<div class="hc" style="top:659px"><span>DIRECCION DE EGRESOS</span></div>
<div class="rh" style="top:673px">1949</div>
<div class="c dt" style="top:673px">31/03/2020</div>
<div class="c nm" style="top:673px">ROMAN SOLANO ROSARIO</div>
<div class="c ed" style="top:673px">19/03/2020</div>
<div class="c cp" style="top:673px">APOYO A PERSONAS DE BAJOS RECURSOS ECONOMICOS</div>
<div class="c vl" style="top:673px">1.631.518,33</div>
<div class="gr" style="top:688px"></div>
<div class="a" style="left:0;top:688px;width:34px;height:1px;background:#e2e2e2"></div>
<div class="hc" style="top:674px"><span>DIRECCION DE EGRESOS</span></div>
<div class="a" style="left:34px;top:478px;width:764px;height:17px;border:2px solid #217346"></div>

<!-- scrollbars -->
<div class="a" style="left:948px;top:223px;width:12px;height:465px;background:#ededed"></div>
<div class="a sbtn" style="left:948px;top:224px"><svg width="11" height="11" viewBox="0 0 11 11"><path d="M3 6.5l2.5-2.5 2.5 2.5z" fill="#555"/></svg></div>
<div class="a sbtn" style="left:948px;top:676px"><svg width="11" height="11" viewBox="0 0 11 11"><path d="M3 4.5l2.5 2.5 2.5-2.5z" fill="#555"/></svg></div>
<div class="a" style="left:949px;top:596px;width:11px;height:13px;background:#fff;border:1px solid #d6d6d6"></div>
<div class="a" style="left:0;top:688px;width:960px;height:12px;background:#ededed"></div>
<div class="a sbtn" style="left:35px;top:689px"><svg width="11" height="11" viewBox="0 0 11 11"><path d="M6.5 3l-2.5 2.5 2.5 2.5z" fill="#555"/></svg></div>
<div class="a" style="left:163px;top:689px;width:281px;height:11px;background:#fff;border:1px solid #d4d4d4"></div>
<div class="a sbtn" style="left:935px;top:689px"><svg width="11" height="11" viewBox="0 0 11 11"><path d="M4.5 3l2.5 2.5-2.5 2.5z" fill="#555"/></svg></div>

<!-- sheet bar -->
<div class="a" style="left:0;top:700px;width:960px;height:21px;background:#efefef"></div>
<svg class="a" style="left:0;top:700px" width="40" height="20" viewBox="0 0 40 20"><path d="M11.5 7.5v5l-2.5-2.5zM28.5 7.5v5l2.5-2.5z" fill="#cfcfcf"/></svg>
<div class="a" style="left:61px;top:700px;width:130px;height:19px;background:#fff;border-left:1px solid #ddd;border-right:1px solid #ddd"></div>
<div class="a" style="left:61px;top:717px;width:130px;height:2px;background:#217346"></div>
<div class="a" style="left:77px;top:704px;font-size:9.85px;font-weight:bold;color:#2a6646;white-space:nowrap">Reporte de Formatos</div>
<!-- status bar -->
<div class="a" style="left:0;top:721px;width:960px;height:18px;background:#fff"></div>
<div class="a" style="left:24px;top:726px;font-size:8.8px;color:#555;white-space:nowrap">Estadísticas del libro de trabajo</div>
<svg class="a" style="left:820px;top:728px" width="7" height="5" viewBox="0 0 7 5"><path d="M1 1l2.5 2.5 2.5-2.5" stroke="#777" fill="none"/></svg>
<div class="a" style="left:858px;top:726px;font-size:8.9px;color:#555;white-space:nowrap">Ayudar a mejorar Office</div>
<!-- ===== taskbar ===== -->
<div class="a" style="left:0;top:739px;width:960px;height:29px;background:linear-gradient(180deg,#332f33 0%,#353034 40%,#2a2629 100%)"></div>
<div class="a" style="left:0;top:739px;width:960px;height:1px;background:#8a878c"></div>
<div class="a" style="left:340px;top:740px;width:200px;height:28px;background:radial-gradient(ellipse at center,rgba(110,100,105,0.35),rgba(0,0,0,0) 70%)"></div><div class="a" style="left:520px;top:740px;width:260px;height:28px;background:radial-gradient(ellipse at center,rgba(110,100,110,0.4),rgba(0,0,0,0) 70%)"></div><div class="a" style="left:760px;top:740px;width:180px;height:28px;background:radial-gradient(ellipse at center,rgba(80,70,80,0.3),rgba(0,0,0,0) 70%)"></div>
<!-- start orb -->
<div class="a" style="left:7px;top:740px;width:27px;height:27px;border-radius:50%;background:radial-gradient(circle at 50% 90%,#5fd0f4 0%,#1d86c8 35%,#155a92 65%,#2a4a6a 100%);box-shadow:0 0 2px 1px rgba(140,170,200,0.4)"></div>
<div class="a" style="left:9px;top:741px;width:23px;height:12px;border-radius:12px 12px 4px 4px;background:linear-gradient(180deg,rgba(220,235,245,0.55),rgba(160,190,210,0.25))"></div>
<svg class="a" style="left:12px;top:744px" width="17" height="17" viewBox="0 0 17 17"><path d="M2 3q2.5-1.5 5 0v4q-2.5-1.5-5 0z" fill="#f26b2b"/><path d="M8.5 2.5q2.5 1.5 5.5 0v4.5q-3 1.5-5.5 0z" fill="#8cc63f"/><path d="M2 8.5q2.5-1.5 5 0v4.5q-2.5-1.5-5 0z" fill="#2aa8e6"/><path d="M8.5 8.5q2.5 1.5 5.5 0v4.5q-3 1.5-5.5 0z" fill="#fdc111"/></svg>
<!-- IE -->
<svg class="a" style="left:54px;top:740px" width="28" height="27" viewBox="0 0 28 27"><path d="M7.5 13H22A7.3 7.3 0 1 0 20 18.5" fill="none" stroke="#45bcec" stroke-width="4"/><ellipse cx="14" cy="13.5" rx="12.5" ry="5.8" transform="rotate(-35 14 13.5)" fill="none" stroke="#eec035" stroke-width="1.6"/></svg>
<!-- explorer -->
<svg class="a" style="left:100px;top:743px" width="26" height="21" viewBox="0 0 26 21"><path d="M1 3h8l2 2h14v15H1z" fill="#e8c867"/><rect x="2" y="6" width="22" height="13" fill="#f6e4a0"/><path d="M5 12h16l2 7H3z" fill="#8ec2e8"/><rect x="7" y="10" width="12" height="3" fill="#f9f3d2"/></svg>
<!-- chrome (active) -->
<div class="a" style="left:138px;top:740px;width:44px;height:27px;border-radius:2px;background:linear-gradient(180deg,#9c9a9c 0%,#848284 50%,#6e6c6e 100%);border:1px solid #a8a6a8"></div>
<svg class="a" style="left:148px;top:742px" width="24" height="24" viewBox="0 0 24 24"><circle cx="12" cy="12" r="11" fill="#db4437"/><path d="M12 12L2.5 6.5A11 11 0 0 0 12 23Z" fill="#0f9d58"/><path d="M12 12L12 23A11 11 0 0 0 21.5 6.5Z" fill="#f4c20d"/><path d="M12 12L21.5 6.5H12Z" fill="#db4437"/><circle cx="12" cy="12" r="5" fill="#fff"/><circle cx="12" cy="12" r="3.8" fill="#4285f4"/></svg>
<!-- media player -->
<svg class="a" style="left:194px;top:743px" width="22" height="21" viewBox="0 0 22 21"><rect x="1" y="1" width="20" height="19" rx="2" fill="#7cb6de"/><rect x="3" y="3" width="16" height="15" rx="1" fill="#a8d2ee"/><circle cx="11" cy="10.5" r="6" fill="#f07f1e"/><path d="M9 7.5v6l5-3z" fill="#fff"/></svg>
<!-- edge -->
<svg class="a" style="left:240px;top:741px" width="25" height="25" viewBox="0 0 25 25"><circle cx="12.5" cy="12.5" r="11" fill="#1f7ed6"/><path d="M3 9A11 11 0 0 1 23.5 12C23 17 18 18 15 17C12 16 14 11 10 10C7 9 4 12 3 9Z" fill="#46c16a"/><path d="M23.5 12C23 8 19 5 14 6" fill="none" stroke="#2fb3c9" stroke-width="2"/><circle cx="14" cy="13" r="3" fill="#114a8a"/></svg>
<!-- word -->
<div class="a" style="left:278px;top:740px;width:43px;height:27px;border:1px solid #58565a;border-radius:2px;background:rgba(255,255,255,0.05)"></div>
<svg class="a" style="left:286px;top:742px" width="24" height="23" viewBox="0 0 24 23"><path d="M3 2h17l2 3v16H3z" fill="#fff"/><path d="M4 4h14v9H4z" fill="#e6eef8"/><text x="4" y="15" font-family="Liberation Sans" font-weight="bold" font-size="13" fill="#1e4ea0">W</text><path d="M16 16h6v5h-6z" fill="#dfe6ef"/></svg>
<!-- tray -->
<div class="a" style="left:797px;top:745px;font-size:9.5px;color:#fff">ES</div>
<svg class="a" style="left:818px;top:749px" width="10" height="8" viewBox="0 0 10 8"><path d="M1 6l4-4 4 4z" fill="#eee"/></svg>
<svg class="a" style="left:835px;top:746px" width="13" height="14" viewBox="0 0 13 14"><path d="M1 5h3l4-3v10l-4-3H1z" fill="#ddd"/><path d="M10 4q2 3 0 6" stroke="#ccc" fill="none"/></svg>
<svg class="a" style="left:852px;top:745px" width="14" height="15" viewBox="0 0 14 15"><path d="M2 1v13" stroke="#ccc"/><path d="M3 2h8v7H3z" fill="#eee"/><circle cx="9.5" cy="10.5" r="3.5" fill="#d42b2b"/><path d="M8 9l3 3M11 9l-3 3" stroke="#fff"/></svg>
<svg class="a" style="left:871px;top:746px" width="15" height="14" viewBox="0 0 15 14"><rect x="2" y="3" width="11" height="8" fill="none" stroke="#ddd" stroke-width="1.3"/><rect x="1" y="1" width="4" height="3" fill="#ddd"/></svg>
<div class="a" style="left:897px;top:742px;font-size:9.3px;color:#f2f2f2;white-space:nowrap">04:52 p.m.</div>
<div class="a" style="left:897px;top:755px;font-size:9.3px;color:#f2f2f2;white-space:nowrap">07/07/2020</div>
<div class="a" style="left:947px;top:740px;width:13px;height:28px;background:linear-gradient(90deg,#3a383c,#4a484c);border-left:1px solid #5a585c"></div>
</body></html>
